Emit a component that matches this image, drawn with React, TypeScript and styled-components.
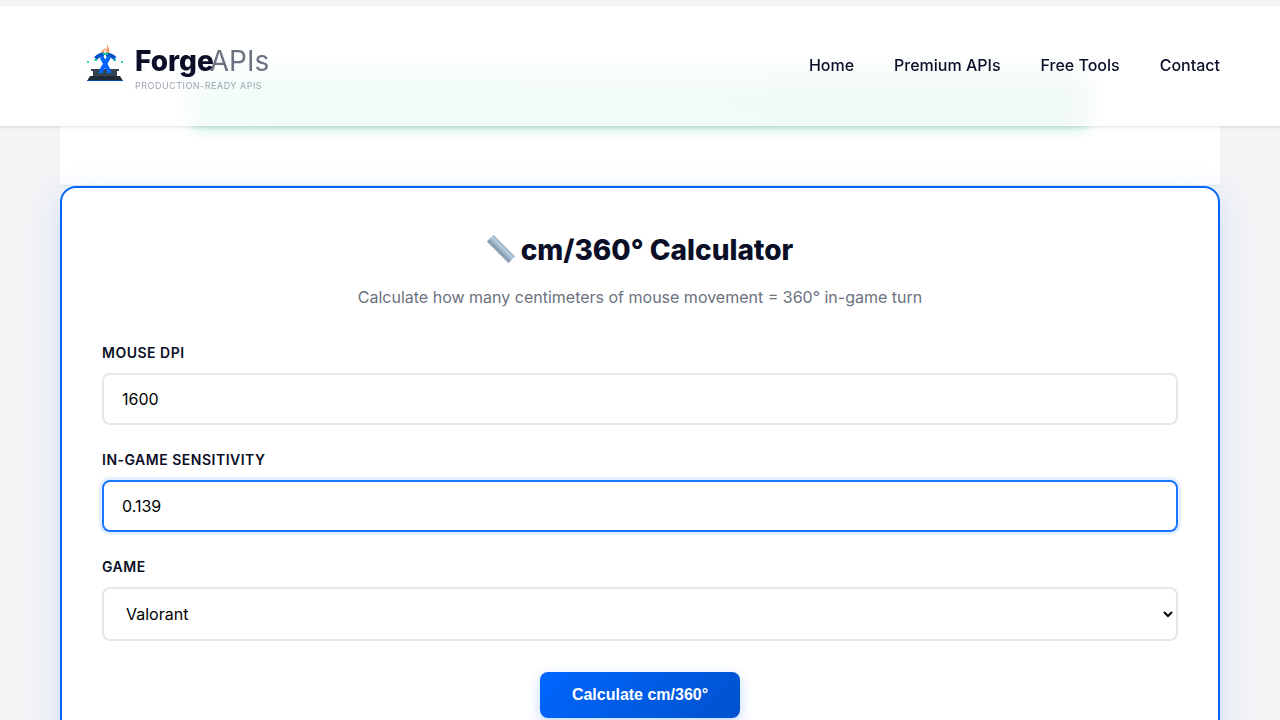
import React, { useId, useState } from "react";
import styled, { createGlobalStyle } from "styled-components";

const GlobalStyle = createGlobalStyle`
  *, *::before, *::after { box-sizing: border-box; }
  body {
    margin: 0;
    background: #f3f4f6;
    color: #0a0e27;
    font-family: Inter, "Liberation Sans", sans-serif;
    font-size: 16px;
    line-height: 26px;
  }
`;

const Page = styled.div`
  padding-top: 6px;
  min-height: 100vh;
`;

const Header = styled.header`
  position: sticky;
  top: 0;
  z-index: 2;
  background: rgba(255, 255, 255, 0.95);
  backdrop-filter: blur(12px);
  box-shadow: 0 1px 3px rgba(0, 0, 0, 0.12);
`;

const HeaderInner = styled.div`
  display: flex;
  align-items: center;
  justify-content: space-between;
  height: 120px;
  max-width: 1280px;
  margin: 0 auto;
  padding: 0 60px 2px;
`;

const Brand = styled.a`
  display: flex;
  align-items: flex-start;
  gap: 10px;
  padding: 7px 0 0 25px;
  color: inherit;
  text-decoration: none;
`;

const BrandText = styled.span`
  display: flex;
  flex-direction: column;
  padding-top: 1px;
`;

const BrandName = styled.span`
  display: flex;
  font-size: 28px;
  line-height: 34px;
`;

const BrandStrong = styled.span`
  font-weight: 800;
`;

const BrandLight = styled.span`
  font-weight: 400;
  color: #6b7280;
  margin-left: -4px;
`;

const Tagline = styled.span`
  font-size: 9px;
  line-height: 16px;
  letter-spacing: 0.5px;
  color: #9ca3af;
`;

const Nav = styled.nav`
  display: flex;
  gap: 40px;
`;

const NavLink = styled.a`
  color: #0a0e27;
  font-weight: 500;
  text-decoration: none;
`;

const Main = styled.main`
  max-width: 1280px;
  margin: -120px auto 0;
  padding: 0 60px;
`;

const Intro = styled.section`
  height: 180px;
  padding: 64px 130px 60px;
  background: #fff;
  border-bottom: 1px solid #e5e7eb;
`;

const Banner = styled.div`
  height: 100%;
  border-radius: 12px;
  background: linear-gradient(135deg, #10b981, #059669);
  box-shadow: 0 4px 12px rgba(16, 185, 129, 0.3);
`;

const Card = styled.section`
  position: relative;
  padding: 40px;
  background: #fff;
  border: 2px solid #0066ff;
  border-radius: 16px;
  box-shadow: 0 8px 32px rgba(0, 102, 255, 0.15);
`;

const Title = styled.h2`
  display: flex;
  align-items: center;
  justify-content: center;
  gap: 6px;
  margin: 0 0 12px;
  font-size: 28px;
  line-height: 44px;
  font-weight: 800;
`;

const Subtitle = styled.p`
  margin: 0 0 32px;
  text-align: center;
  color: #6b7280;
`;

const Form = styled.form`
  display: flex;
  flex-direction: column;
  gap: 24px;
`;

const Field = styled.div`
  display: flex;
  flex-direction: column;
  gap: 9px;
`;

const Label = styled.label`
  font-size: 14px;
  line-height: 22px;
  font-weight: 600;
  letter-spacing: 0.5px;
  text-transform: uppercase;
`;

const Input = styled.input<{ $active?: boolean }>`
  width: 100%;
  height: 52px;
  padding: 0 18px;
  font: inherit;
  color: #000;
  background: #fff;
  border: 2px solid ${(p) => (p.$active ? "#1a75ff" : "#e5e7eb")};
  border-radius: 8px;
  outline: none;
  box-shadow: ${(p) => (p.$active ? "0 0 0 3px rgba(0, 102, 255, 0.1)" : "none")};
`;

const Select = styled.select`
  width: 100%;
  height: 54px;
  padding: 0 0 0 18px;
  font: inherit;
  color: #000;
  background: #fff;
  border: 2px solid #e5e7eb;
  border-radius: 8px;
`;

const Submit = styled.button`
  align-self: center;
  margin-top: 7px;
  height: 46px;
  padding: 0 32px;
  font: 600 16px/22px "Liberation Sans", sans-serif;
  color: #fff;
  background: linear-gradient(135deg, #0066ff, #0052cc);
  border: 0;
  border-radius: 8px;
  box-shadow: 0 4px 12px rgba(0, 102, 255, 0.25);
  cursor: pointer;
`;

function ForgeLogo() {
  return (
    <svg width="40" height="40" viewBox="0 0 40 40" aria-hidden="true">
      <path d="M5 33h30l3 5H2z" fill="#1f2937" />
      <path d="M2 37.600h36" stroke="#0052cc" strokeWidth="0.8" />
      <path d="M6 26h28v2h-2v5H8v-5H6z" fill="#374151" />
      <path d="M11 29h18v2H11z" fill="#1f4e5a" />
      <path d="M16.500 10c0-3 2.500-3 3.500-5 .5 1 .5 2 1 2 1-1 1-3 1.500-6 .5 4 2.500 5 1.500 9z" fill="#ff8a5c" />
      <path d="M18.500 10c0-2 1-2.500 2-4 .6 2 2.500 2 2 4z" fill="#ffe3d0" />
      <path d="M16.500 8.500h2V11h-2zM22 8.500h2V11h-2z" fill="#fbb024" />
      <path d="M16.500 14 24 28M24 14l-8 14" stroke="#0066ff" strokeWidth="4" strokeLinejoin="round" />
      <path d="M14 28.500h4M22 28.500h4" stroke="#0066ff" strokeWidth="3" />
      <path d="M10.500 15.500Q14 11.500 19 11.500M21 11.500Q26 11.500 30 15.500" stroke="#0052cc" strokeWidth="4" fill="none" />
      <path d="M18 10h5v2h-5zM9.500 16h2.500v2H9.500zM28.500 16H31v2h-2.500z" fill="#10c7a0" />
      <path d="M2 18h2v2H2zM36 18h2v2h-2z" fill="#2dd9b0" />
    </svg>
  );
}

function RulerIcon() {
  return (
    <svg width="28" height="30" viewBox="0 0 28 30" aria-hidden="true">
      <path d="M0 6.500 6.500 0 28 21.500 21.500 28z" fill="#b8cee0" />
      <path d="M0 6.500 2.500 4 24 25.500 21.500 28z" fill="#8ba0b5" />
      <path d="M2.500 4 4 2.500 25.500 24 24 25.500z" fill="#a3b8ca" />
      <path d="m6.500 0-1 1L27 22.500l1-1z" fill="#9eb2c6" />
    </svg>
  );
}

const links = ["Home", "Premium APIs", "Free Tools", "Contact"];

export default function App() {
  const id = useId();
  const [dpi, setDpi] = useState("1600");
  const [sensitivity, setSensitivity] = useState("0.139");

  return (
    <Page>
      <GlobalStyle />
      <Header>
        <HeaderInner>
          <Brand href="#home">
            <ForgeLogo />
            <BrandText>
              <BrandName>
                <BrandStrong>Forge</BrandStrong>
                <BrandLight>APIs</BrandLight>
              </BrandName>
              <Tagline>PRODUCTION-READY APIS</Tagline>
            </BrandText>
          </Brand>
          <Nav>
            {links.map((link) => (
              <NavLink key={link} href="#">
                {link}
              </NavLink>
            ))}
          </Nav>
        </HeaderInner>
      </Header>
      <Main>
        <Intro>
          <Banner />
        </Intro>
        <Card>
          <Title>
            <RulerIcon />
            cm/360° Calculator
          </Title>
          <Subtitle>Calculate how many centimeters of mouse movement = 360° in-game turn</Subtitle>
          <Form onSubmit={(e) => e.preventDefault()}>
            <Field>
              <Label htmlFor={`${id}-dpi`}>Mouse DPI</Label>
              <Input id={`${id}-dpi`} value={dpi} onChange={(e) => setDpi(e.target.value)} />
            </Field>
            <Field>
              <Label htmlFor={`${id}-sens`}>In-Game Sensitivity</Label>
              <Input
                id={`${id}-sens`}
                $active
                value={sensitivity}
                onChange={(e) => setSensitivity(e.target.value)}
              />
            </Field>
            <Field>
              <Label htmlFor={`${id}-game`}>Game</Label>
              <Select id={`${id}-game`} defaultValue="Valorant">
                <option>Valorant</option>
              </Select>
            </Field>
            <Submit type="submit">Calculate cm/360°</Submit>
          </Form>
        </Card>
      </Main>
    </Page>
  );
}
